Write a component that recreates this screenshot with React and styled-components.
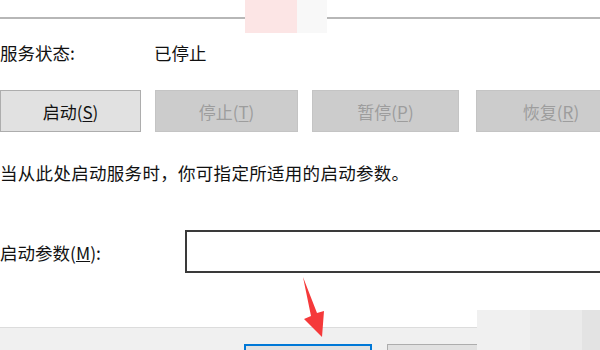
import React from "react";
import styled, { createGlobalStyle } from "styled-components";

const Global = createGlobalStyle`
  html, body {
    margin: 0;
    padding: 0;
    background: #fff;
    overflow: hidden;
  }
  body {
    font-family: "Noto Sans CJK SC", "Noto Sans", sans-serif;
    color: #111;
  }
`;

const Page = styled.div`
  position: relative;
  width: 600px;
  height: 350px;
  overflow: hidden;
  background: #fff;
  font-size: 17.5px;
`;

const TopBar = styled.div`
  display: flex;
  align-items: flex-start;
  height: 36px;
`;

const Rule = styled.div`
  flex: ${(p) => (p.$grow ? "1" : `0 0 ${p.$w}px`)};
  height: 2px;
  margin-top: 17px;
  background: #b7b7b7;
`;

const Patch = styled.div`
  flex: 0 0 ${(p) => p.$w}px;
  height: 33px;
  background: ${(p) => p.$bg};
`;

const StatusRow = styled.div`
  display: flex;
  height: 34px;
  line-height: 34px;
`;

const StatusLabel = styled.span`
  width: 154px;
`;

const ButtonRow = styled.div`
  display: flex;
  margin-top: 20px;
  width: 640px;
`;

const Btn = styled.div`
  flex: 0 0 ${(p) => p.$w}px;
  margin-right: ${(p) => p.$gap || 0}px;
  height: 42px;
  box-sizing: border-box;
  display: flex;
  align-items: center;
  justify-content: center;
  font-size: 17px;
  background: ${(p) => (p.$disabled ? "#cccccc" : "#e1e1e1")};
  border: 1px solid ${(p) => (p.$disabled ? "#c4c4c4" : "#adadad")};
  color: ${(p) => (p.$disabled ? "#9d9d9d" : "#111")};
  u {
    text-underline-offset: 2px;
  }
`;

const Hint = styled.div`
  margin-top: 29px;
  height: 24px;
  line-height: 24px;
  white-space: nowrap;
  letter-spacing: 0.3px;
`;

const ParamRow = styled.div`
  display: flex;
  align-items: center;
  margin-top: 45px;
  height: 43px;
`;

const ParamLabel = styled.span`
  flex: 0 0 185px;
  padding-top: 2px;
`;

const Input = styled.div`
  flex: 0 0 430px;
  height: 43px;
  box-sizing: border-box;
  border: 2px solid #3a3a3a;
  background: #fff;
`;

const Footer = styled.div`
  display: flex;
  margin-top: 37px;
  height: 40px;
`;

const FooterMain = styled.div`
  flex: 0 0 477px;
  display: flex;
  flex-direction: column;
  overflow: hidden;
`;

const FooterGap = styled.div`
  flex: 0 0 17px;
  background: #fff;
`;

const FooterBand = styled.div`
  flex: 0 0 23px;
  display: flex;
  gap: 15px;
  padding: 16px 0 0 244px;
  background: #f0f0f0;
  border-top: 1px solid #dcdcdc;
  overflow: hidden;
`;

const FooterBtn = styled.div`
  flex: 0 0 128px;
  height: 30px;
  box-sizing: border-box;
  background: #e1e1e1;
  border: ${(p) => (p.$primary ? "2px solid #0078d7" : "1px solid #adadad")};
`;

const Backdrop = styled.div`
  flex: 1;
  display: flex;
`;

const Shade = styled.div`
  flex: ${(p) => (p.$w ? `0 0 ${p.$w}px` : "1")};
  background: ${(p) => p.$bg};
`;

const Arrow = styled.svg`
  position: absolute;
  left: 295px;
  top: 270px;
  width: 40px;
  height: 75px;
`;

export default function App() {
  return (
    <>
      <Global />
      <Page>
        <TopBar>
          <Rule $w={245} />
          <Patch $w={52} $bg="#fce5e5" />
          <Patch $w={30} $bg="#f8f8f8" />
          <Rule $grow />
        </TopBar>
        <StatusRow>
          <StatusLabel>服务状态:</StatusLabel>
          <span>已停止</span>
        </StatusRow>
        <ButtonRow>
          <Btn $w={141} $gap={14}>
            启动(<u>S</u>)
          </Btn>
          <Btn $w={143} $gap={14} $disabled>
            停止(<u>T</u>)
          </Btn>
          <Btn $w={147} $gap={17} $disabled>
            暂停(<u>P</u>)
          </Btn>
          <Btn $w={150} $disabled>
            恢复(<u>R</u>)
          </Btn>
        </ButtonRow>
        <Hint>当从此处启动服务时，你可指定所适用的启动参数。</Hint>
        <ParamRow>
          <ParamLabel>
            启动参数(<u>M</u>):
          </ParamLabel>
          <Input />
        </ParamRow>
        <Footer>
          <FooterMain>
            <FooterGap />
            <FooterBand>
              <FooterBtn $primary />
              <FooterBtn />
            </FooterBand>
          </FooterMain>
          <Backdrop>
            <Shade $w={53} $bg="#f0f0f0" />
            <Shade $w={52} $bg="#ebebeb" />
            <Shade $bg="#e3e3e3" />
          </Backdrop>
        </Footer>
        <Arrow viewBox="0 0 40 75">
          <polygon
            points="8,7 22,43 29,41 27,67 9,49 16,46"
            fill="#f5393a"
          />
        </Arrow>
      </Page>
    </>
  );
}
